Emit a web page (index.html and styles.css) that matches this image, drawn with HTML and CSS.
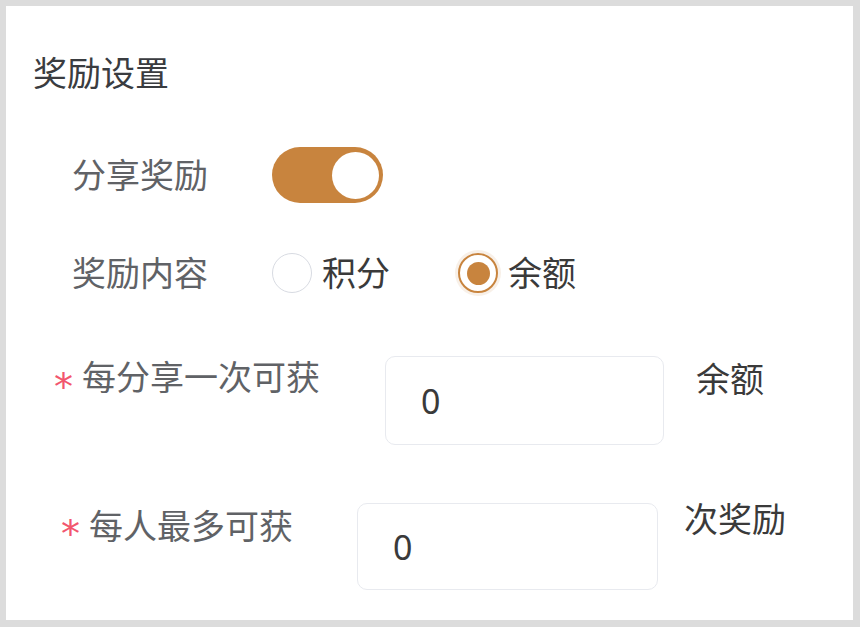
FILE: index.html
```html
<!DOCTYPE html>
<html lang="zh-CN">
<head>
<meta charset="utf-8">
<title>奖励设置</title>
<link rel="stylesheet" href="styles.css">
</head>
<body>
<div class="panel">
  <h2 class="title">奖励设置</h2>

  <div class="row row-switch">
    <span class="label">分享奖励</span>
    <span class="switch is-on"><span class="knob"></span></span>
  </div>

  <div class="row row-radio">
    <span class="label">奖励内容</span>
    <label class="radio"><span class="dot"></span><span class="opt">积分</span></label>
    <label class="radio is-checked"><span class="dot"></span><span class="opt">余额</span></label>
  </div>

  <div class="row field field-a">
    <span class="req">*</span>
    <span class="flabel">每分享一次可获</span>
    <div class="input input-a">0</div>
    <span class="suffix">余额</span>
  </div>

  <div class="row field field-b">
    <span class="req">*</span>
    <span class="flabel">每人最多可获</span>
    <div class="input input-b">0</div>
    <span class="suffix">次奖励</span>
  </div>
</div>
</body>
</html>
```

FILE: styles.css
```css
html, body {
  margin: 0;
  padding: 0;
}
body {
  background: #dcdcdc;
  padding: 6px 7px 7px 6px;
  font-family: "Noto Sans", "Noto Sans CJK SC", sans-serif;
  color: #606266;
}
.panel {
  background: #ffffff;
  width: 847px;
  height: 614px;
  box-sizing: border-box;
  display: flex;
  flex-direction: column;
  overflow: hidden;
}
.title {
  margin: 50px 0 0 27px;
  font-size: 34px;
  line-height: 34px;
  font-weight: normal;
  color: #3a3c40;
}
.row {
  display: flex;
  align-items: center;
}
.label {
  font-size: 34px;
  line-height: 34px;
  width: 200px;
  flex: none;
}
.row-switch {
  margin: 57px 0 0 66px;
  height: 56px;
}
.switch {
  width: 111px;
  height: 56px;
  border-radius: 28px;
  background: #c8843e;
  display: flex;
  align-items: center;
  justify-content: flex-end;
  padding: 0 4px;
  box-sizing: border-box;
}
.knob {
  width: 47px;
  height: 47px;
  border-radius: 50%;
  background: #fff;
}
.row-radio {
  margin: 50px 0 0 66px;
  height: 40px;
}
.radio {
  display: flex;
  align-items: center;
  margin-right: 68px;
}
.dot {
  width: 40px;
  height: 40px;
  box-sizing: border-box;
  border: 1.5px solid #d8dbe2;
  border-radius: 50%;
  background: #fff;
  display: flex;
  align-items: center;
  justify-content: center;
}
.radio.is-checked .dot {
  border: 2px solid #c8843e;
  box-shadow: 0 0 0 3px rgba(200, 132, 62, 0.12);
}
.radio.is-checked .dot::after {
  content: "";
  width: 23px;
  height: 23px;
  border-radius: 50%;
  background: #c8843e;
}
.opt {
  font-size: 34px;
  line-height: 34px;
  color: #3a3a3a;
  margin-left: 10px;
}
.field {
  align-items: flex-start;
}
.req {
  width: 28px;
  flex: none;
  font-family: "DejaVu Sans", sans-serif;
  font-size: 38px;
  line-height: 62px;
  color: #f2566e;
}
.flabel {
  font-size: 34px;
  line-height: 34px;
  flex: none;
}
.input {
  flex: none;
  box-sizing: border-box;
  border: 1px solid #e8eaef;
  border-radius: 10px;
  display: flex;
  align-items: center;
  padding-left: 35px;
  font-size: 34px;
  color: #3a3a3a;
}
.suffix {
  font-size: 34px;
  line-height: 34px;
  color: #3a3a3a;
}
.field-a {
  margin: 63px 0 0 48px;
}
.field-a .flabel {
  margin-top: 4px;
}
.input-a {
  width: 279px;
  height: 89px;
  margin-left: 65px;
}
.field-a .suffix {
  margin: 6px 0 0 32px;
}
.field-b {
  margin: 58px 0 0 55px;
}
.field-b .flabel {
  margin-top: 6px;
}
.input-b {
  width: 301px;
  height: 87px;
  margin-left: 64px;
}
.field-b .suffix {
  margin: -1px 0 0 26px;
}
```
